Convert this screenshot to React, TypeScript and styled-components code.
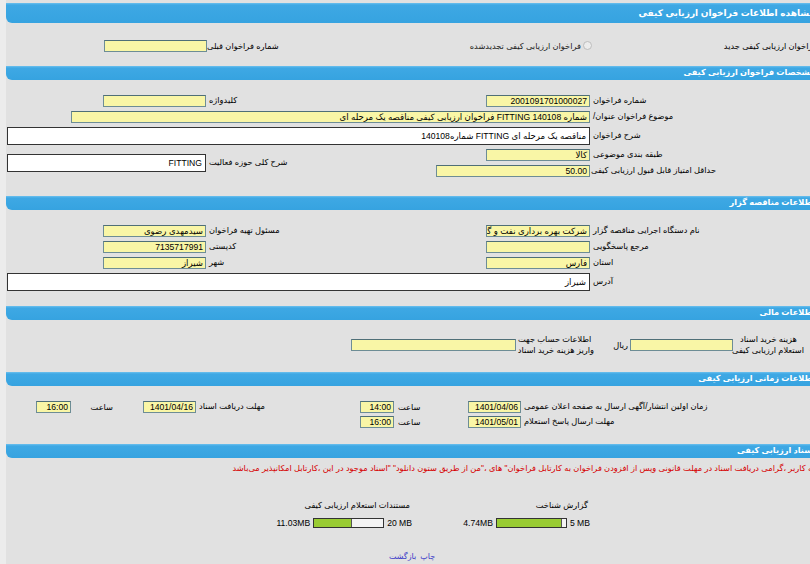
import styled, { createGlobalStyle } from "styled-components";

const font = `"Liberation Sans", "DejaVu Sans", sans-serif`;

const Global = createGlobalStyle`
  html, body {
    margin: 0;
    padding: 0;
    overflow: hidden;
    background: #ececec;
  }
  body {
    font-family: ${font};
    font-size: 8.25px;
    color: #000;
  }
`;

const Page = styled.div`
  margin-left: 6px;
  width: 812px;
  min-height: 564px;
  background: #e1e1e1;
  direction: rtl;
  padding-top: 3px;
  box-sizing: border-box;
`;

const Bar = styled.div<{ $tall?: boolean }>`
  height: ${(p) => (p.$tall ? 20 : 14)}px;
  line-height: ${(p) => (p.$tall ? 20 : 14)}px;
  background: linear-gradient(#6cc0ee 0, #3ea8e4 2px, #36a3e0 100%);
  border-radius: 0 0 2px 6px;
  color: #fff;
  font-weight: bold;
  font-size: ${(p) => (p.$tall ? 9 : 8.2)}px;
  padding-right: 3px;
  white-space: nowrap;
  overflow: hidden;
`;

const Body = styled.div<{ $top: number; $bottom: number }>`
  padding-top: ${(p) => p.$top}px;
  padding-bottom: ${(p) => p.$bottom}px;
`;

/* main two-pair form grid, right to left */
const FormGrid = styled.div`
  display: grid;
  grid-template-columns: 102px 124px 302px 82px 202px;
  row-gap: 4px;
  align-items: center;
`;

const Label = styled.div<{ $col: number; $row?: string }>`
  grid-column: ${(p) => p.$col};
  grid-row: ${(p) => p.$row || "auto"};
  text-align: left;
  padding-left: 1px;
  white-space: nowrap;
  line-height: 12px;
`;

const Cell = styled.div<{ $col: string; $row?: string }>`
  grid-column: ${(p) => p.$col};
  grid-row: ${(p) => p.$row || "auto"};
  display: flex;
  align-items: center;
  padding-right: 2px;
`;

const Input = styled.div<{ $w: number }>`
  width: ${(p) => p.$w}px;
  height: 12px;
  box-sizing: border-box;
  background: #f9f6a6;
  border: 1px solid #6d8d95;
  border-top-color: #4f6f77;
  line-height: 10px;
  padding: 0 2px;
  white-space: nowrap;
  overflow: hidden;
  font-size: 8.6px;
`;

const TextBox = styled.div<{ $w: number }>`
  width: ${(p) => p.$w}px;
  height: 18px;
  box-sizing: border-box;
  background: #fff;
  border: 1px solid #333;
  line-height: 16px;
  padding: 0 3px;
  white-space: nowrap;
  overflow: hidden;
  font-size: 8.6px;
`;

/* section 1 */
const ChoiceRow = styled.div`
  display: flex;
  align-items: center;
  height: 13px;
`;

const Choice = styled.label<{ $w: number }>`
  width: ${(p) => p.$w}px;
  display: flex;
  align-items: center;
  gap: 2px;
  white-space: nowrap;
`;

const Radio = styled.span<{ $on?: boolean }>`
  width: 9px;
  height: 9px;
  border-radius: 50%;
  border: 1px solid #bdbdbd;
  background: ${(p) => (p.$on ? "radial-gradient(#555 30%, #f4f4f4 40%)" : "#ececec")};
  box-sizing: border-box;
  flex: none;
`;

const PairLabel = styled.span<{ $w: number }>`
  width: ${(p) => p.$w}px;
  text-align: left;
  white-space: nowrap;
`;

/* financial */
const MoneyRow = styled.div`
  display: flex;
  align-items: center;
`;

const TwoLine = styled.div<{ $w: number; $align: string; $pad?: number }>`
  width: ${(p) => p.$w}px;
  text-align: ${(p) => p.$align};
  padding-right: ${(p) => p.$pad || 0}px;
  box-sizing: border-box;
  line-height: 11px;
  white-space: nowrap;
`;

const Unit = styled.span<{ $w: number }>`
  width: ${(p) => p.$w}px;
  padding-right: 2px;
  box-sizing: border-box;
`;

/* time grid */
const TimeGrid = styled.div`
  display: grid;
  grid-template-columns: 102px 193px 57px 70px 41px 157px 57px 68px 67px;
  row-gap: 3px;
  align-items: center;
`;

const TimeWord = styled.div<{ $col: number; $align: string; $pad?: number }>`
  grid-column: ${(p) => p.$col};
  text-align: ${(p) => p.$align};
  padding-right: ${(p) => p.$pad || 0}px;
  padding-left: 2px;
  white-space: nowrap;
`;

/* documents */
const Notice = styled.div`
  color: #d60000;
  white-space: nowrap;
  margin-right: -6px;
  line-height: 11px;
`;

const Stats = styled.div`
  display: grid;
  grid-template-columns: 178px 178px;
  padding-right: 228px;
  margin-top: 26px;
  row-gap: 8px;
`;

const StatTitle = styled.div`
  white-space: nowrap;
  padding-right: 2px;
`;

const SizeRow = styled.div`
  display: flex;
  align-items: center;
  gap: 3px;
`;

const Size = styled.span`
  direction: ltr;
  white-space: nowrap;
  font-size: 8.6px;
`;

const Meter = styled.div`
  width: 71px;
  height: 10px;
  box-sizing: border-box;
  border: 1px solid #333;
  background: #f4f4f4;
  direction: ltr;
  display: flex;
`;

const MeterFill = styled.div`
  height: 100%;
  background: #99cc33;
  border-right: 1px solid #555;
  box-sizing: border-box;
`;

const Links = styled.div`
  margin-top: 24px;
  font-size: 8px;
  display: flex;
  justify-content: center;
  gap: 4px;
`;

const Link = styled.a`
  color: #3a3ac8;
  text-decoration: none;
`;

function Meterbar({ used, total }: { used: number; total: number }) {
  return (
    <Meter>
      <MeterFill style={{ width: `${(used / total) * 100}%` }} />
    </Meter>
  );
}

export default function App() {
  return (
    <>
      <Global />
      <Page>
        <Bar $tall>مشاهده اطلاعات فراخوان ارزیابی کیفی</Bar>
        <Body $top={16} $bottom={14}>
          <ChoiceRow>
            <Choice $w={236} style={{ marginRight: -10 }}>
              <Radio $on />
              فراخوان ارزیابی کیفی جدید
            </Choice>
            <Choice $w={312}>
              <Radio />
              <span style={{ color: "#222" }}>فراخوان ارزیابی کیفی تجدیدشده</span>
            </Choice>
            <PairLabel $w={73}>شماره فراخوان قبلی</PairLabel>
            <Input $w={103} />
          </ChoiceRow>
        </Body>

        <Bar>مشخصات فراخوان ارزیابی کیفی</Bar>
        <Body $top={15} $bottom={19}>
          <FormGrid>
            <Label $col={2}>شماره فراخوان</Label>
            <Cell $col="3">
              <Input $w={104}>2001091701000027</Input>
            </Cell>
            <Label $col={4}>کلیدواژه</Label>
            <Cell $col="5">
              <Input $w={103} />
            </Cell>

            <Label $col={2}>موضوع فراخوان عنوان/</Label>
            <Cell $col="3 / 6">
              <Input $w={519}>شماره 140108 FITTING فراخوان ارزیابی کیفی مناقصه یک مرحله ای</Input>
            </Cell>

            <Label $col={2}>شرح فراخوان</Label>
            <Cell $col="3 / 6">
              <TextBox $w={583}>مناقصه یک مرحله ای FITTING شماره140108</TextBox>
            </Cell>

            <Label $col={2} $row="4">طبقه بندی موضوعی</Label>
            <Cell $col="3" $row="4">
              <Input $w={104}>کالا</Input>
            </Cell>
            <Label $col={4} $row="4 / 6">شرح کلی حوزه فعالیت</Label>
            <Cell $col="5" $row="4 / 6">
              <TextBox $w={199}>FITTING</TextBox>
            </Cell>

            <Label $col={2} $row="5">حداقل امتیاز قابل قبول ارزیابی کیفی</Label>
            <Cell $col="3" $row="5">
              <Input $w={154}>50.00</Input>
            </Cell>
          </FormGrid>
        </Body>

        <Bar>اطلاعات مناقصه گزار</Bar>
        <Body $top={15} $bottom={15}>
          <FormGrid>
            <Label $col={2}>نام دستگاه اجرایی مناقصه گزار</Label>
            <Cell $col="3">
              <Input $w={104}>شرکت بهره برداری نفت و گاز فارس</Input>
            </Cell>
            <Label $col={4}>مسئول تهیه فراخوان</Label>
            <Cell $col="5">
              <Input $w={103}>سیدمهدی رضوی</Input>
            </Cell>

            <Label $col={2}>مرجع پاسخگویی</Label>
            <Cell $col="3">
              <Input $w={104} />
            </Cell>
            <Label $col={4}>کدپستی</Label>
            <Cell $col="5">
              <Input $w={103}>7135717991</Input>
            </Cell>

            <Label $col={2}>استان</Label>
            <Cell $col="3">
              <Input $w={104}>فارس</Input>
            </Cell>
            <Label $col={4}>شهر</Label>
            <Cell $col="5">
              <Input $w={103}>شیراز</Input>
            </Cell>

            <Label $col={2}>آدرس</Label>
            <Cell $col="3 / 6">
              <TextBox $w={583}>شیراز</TextBox>
            </Cell>
          </FormGrid>
        </Body>

        <Bar>اطلاعات مالی</Bar>
        <Body $top={14} $bottom={16}>
          <MoneyRow>
            <TwoLine $w={85} $align="center" $pad={14}>
              هزینه خرید اسناد
              <br />
              استعلام ارزیابی کیفی
            </TwoLine>
            <Input $w={103} />
            <Unit $w={36}>ریال</Unit>
            <TwoLine $w={76} $align="left">
              اطلاعات حساب جهت
              <br />
              واریز هزینه خرید اسناد
            </TwoLine>
            <Input $w={165} style={{ marginRight: 2 }} />
          </MoneyRow>
        </Body>

        <Bar>اطلاعات زمانی ارزیابی کیفی</Bar>
        <Body $top={15} $bottom={16}>
          <TimeGrid>
            <Label $col={2}>زمان اولین انتشار/آگهی ارسال به صفحه اعلان عمومی</Label>
            <Cell $col="3">
              <Input $w={53}>1401/04/06</Input>
            </Cell>
            <TimeWord $col={4} $align="left">ساعت</TimeWord>
            <Cell $col="5">
              <Input $w={34}>14:00</Input>
            </Cell>
            <Label $col={6}>مهلت دریافت اسناد</Label>
            <Cell $col="7">
              <Input $w={53}>1401/04/16</Input>
            </Cell>
            <TimeWord $col={8} $align="right" $pad={28}>ساعت</TimeWord>
            <Cell $col="9">
              <Input $w={35}>16:00</Input>
            </Cell>

            <Label $col={2}>مهلت ارسال پاسخ استعلام</Label>
            <Cell $col="3">
              <Input $w={53}>1401/05/01</Input>
            </Cell>
            <TimeWord $col={4} $align="left">ساعت</TimeWord>
            <Cell $col="5">
              <Input $w={34}>16:00</Input>
            </Cell>
          </TimeGrid>
        </Body>

        <Bar>اسناد ارزیابی کیفی</Bar>
        <Body $top={5} $bottom={0}>
          <Notice>
            توجه کاربر ،گرامی دریافت اسناد در مهلت قانونی وپس از افزودن فراخوان به کارتابل فراخوان" های ،"من از طریق ستون دانلود" "اسناد موجود در این ،کارتابل امکانپذیر می‌باشد
          </Notice>
          <Stats>
            <StatTitle>گزارش شناخت</StatTitle>
            <StatTitle>مستندات استعلام ارزیابی کیفی</StatTitle>
            <SizeRow>
              <Size>5 MB</Size>
              <Meterbar used={4.74} total={5} />
              <Size>4.74MB</Size>
            </SizeRow>
            <SizeRow>
              <Size>20 MB</Size>
              <Meterbar used={11.03} total={20} />
              <Size>11.03MB</Size>
            </SizeRow>
          </Stats>
          <Links>
            <Link href="#">چاپ</Link>
            <Link href="#">بازگشت</Link>
          </Links>
        </Body>
      </Page>
    </>
  );
}
